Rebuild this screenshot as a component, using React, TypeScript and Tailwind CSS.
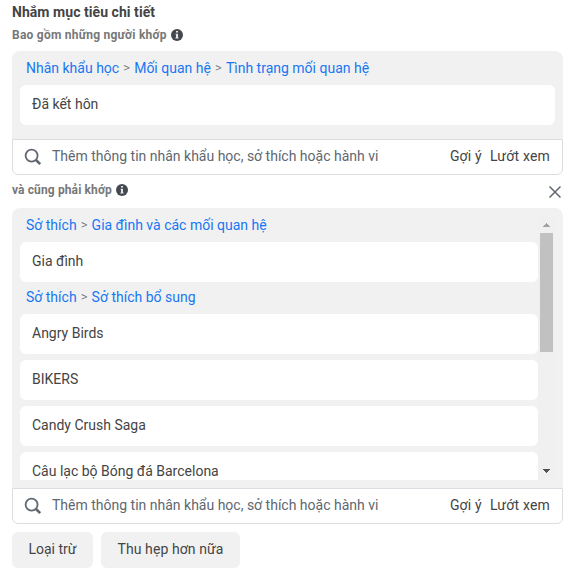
import React, { useState } from 'react';

const matchedPath = ['Nhân khẩu học', 'Mối quan hệ', 'Tình trạng mối quan hệ'];

const interestGroups = [
  { path: ['Sở thích', 'Gia đình và các mối quan hệ'], items: ['Gia đình'] },
  {
    path: ['Sở thích', 'Sở thích bổ sung'],
    items: ['Angry Birds', 'BIKERS', 'Candy Crush Saga', 'Câu lạc bộ Bóng đá Barcelona'],
  },
];

const InfoIcon = () => (
  <svg width="12" height="12" viewBox="0 0 12 12" className="shrink-0">
    <circle cx="6" cy="6" r="6" fill="#444950" />
    <path d="M5 2h2v1.6H5zM4.6 4.8H7v3.8h.6v.9H4.4v-.9H5V5.7h-.4z" fill="#e4e5e7" />
  </svg>
);

const Breadcrumb = ({ path }: { path: string[] }) => (
  <div className="flex h-[18px] items-center pl-1.5 text-[#1877f2]">
    {path.map((part, i) => (
      <React.Fragment key={part}>
        {i > 0 && <span className="w-[15px] text-center text-[13px] font-light text-[#666]">&gt;</span>}
        <a href="#">{part}</a>
      </React.Fragment>
    ))}
  </div>
);

const Item = ({ name }: { name: string }) => (
  <div className="flex h-10 shrink-0 items-center rounded-md bg-white px-3 pb-0.5">{name}</div>
);

const SearchBar = () => {
  const [value, setValue] = useState('');

  return (
    <div className="flex h-9 items-center rounded-b-md border border-[#dadde1] bg-white pr-3 pl-[11px]">
      <svg width="18" height="18" viewBox="0 0 18 18" fill="none" stroke="#606770" className="mr-2.5 shrink-0">
        <circle cx="7.6" cy="7.6" r="6" strokeWidth="1.8" />
        <path d="M12 12l4.2 4.2" strokeWidth="2.6" />
      </svg>
      <input
        value={value}
        onChange={(e) => setValue(e.target.value)}
        placeholder="Thêm thông tin nhân khẩu học, sở thích hoặc hành vi"
        className="min-w-0 flex-1 pb-0.5 outline-none placeholder:text-[#606770]"
      />
      <button className="mr-2 pb-0.5 tracking-[0.2px]">Gợi ý</button>
      <button className="pb-0.5 tracking-[0.2px]">Lướt xem</button>
    </div>
  );
};

const ScrollTrack = () => (
  <div className="flex w-[17px] flex-col items-center bg-[#f0f0f0] pt-[7px] pb-[7px]">
    <svg width="7" height="4" viewBox="0 0 7 4" shapeRendering="crispEdges">
      <path d="M3 0h1v1H3zM2 1h3v1H2zM1 2h5v1H1zM0 3h7v1H0z" fill="#a3a3a3" />
    </svg>
    <div className="mt-1.5 h-[119px] w-[13px] bg-[#c1c1c1]" />
    <svg width="7" height="4" viewBox="0 0 7 4" shapeRendering="crispEdges" className="mt-auto">
      <path d="M0 0h7v1H0zM1 1h5v1H1zM2 2h3v1H2zM3 3h1v1H3z" fill="#505050" />
    </svg>
  </div>
);

const App = () => {
  return (
    <div className="h-[569px] w-[579px] overflow-hidden bg-white pr-4 pl-3 font-['Roboto','Liberation_Sans',sans-serif] text-sm leading-[18px] text-[#444]">
      <h2 className="pt-[3px] font-bold tracking-[0.05px]">Nhắm mục tiêu chi tiết</h2>
      <div className="flex h-[30px] items-center gap-1 pb-[3px] text-xs font-bold text-[#777]">
        <span className="tracking-[0.24px]">Bao gồm những người khớp</span>
        <InfoIcon />
      </div>

      {/* Demographics */}
      <div className="h-[88px] rounded-t-lg bg-[#f1f1f1] p-2">
        <Breadcrumb path={matchedPath} />
        <div className="h-2" />
        <Item name="Đã kết hôn" />
      </div>
      <SearchBar />

      <div className="flex h-[33px] items-center pb-[3px] text-xs font-bold text-[#777]">
        <span className="mr-1 tracking-[0.12px]">và cũng phải khớp</span>
        <InfoIcon />
        <button className="ml-auto pt-[3px] pr-0.5" aria-label="Xóa">
          <svg width="12" height="12" viewBox="0 0 12 12" fill="none" stroke="#606770" strokeWidth="1.5">
            <path d="M.5.5l11 11M11.5.5l-11 11" />
          </svg>
        </button>
      </div>

      {/* Interests */}
      <div className="h-[280px] rounded-t-lg bg-[#f1f1f1] p-2">
        <div className="flex h-[264px]">
          <div className="flex flex-1 flex-col gap-1.5 overflow-hidden">
            {interestGroups.map((group) => (
              <div key={group.path[1]} className="flex flex-col gap-1.5">
                <div className="pb-0.5">
                  <Breadcrumb path={group.path} />
                </div>
                {group.items.map((item) => (
                  <Item key={item} name={item} />
                ))}
              </div>
            ))}
          </div>
          <ScrollTrack />
        </div>
      </div>
      <SearchBar />

      <div className="mt-2 flex gap-2">
        <button className="h-9 w-[81px] rounded-md bg-[#f1f1f1] pb-0.5">Loại trừ</button>
        <button className="h-9 w-[139px] rounded-md bg-[#f1f1f1] pb-0.5 tracking-[0.1px]">Thu hẹp hơn nữa</button>
      </div>
    </div>
  );
};

export default App;
